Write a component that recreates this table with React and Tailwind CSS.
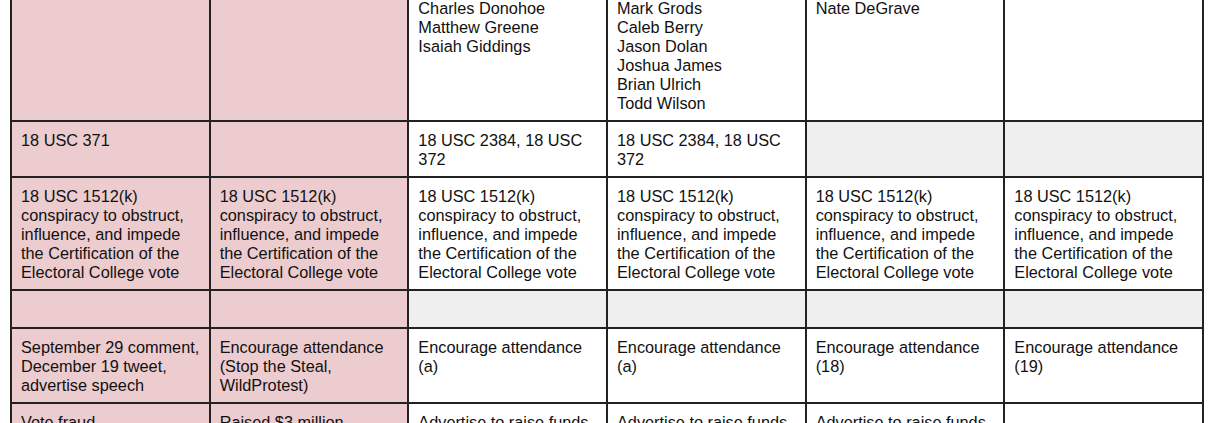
const PINK = 'bg-[#ecccce]';
const GRAY = 'bg-[#efefef]';
const WHITE = 'bg-white';

const charge =
  '18 USC 1512(k) conspiracy to obstruct, influence, and impede the Certification of the Electoral College vote';

// each row: [text, background] per column
const rows = [
  [
    ['', PINK],
    ['', PINK],
    [['Charles Donohoe', 'Matthew Greene', 'Isaiah Giddings'], WHITE],
    [['Mark Grods', 'Caleb Berry', 'Jason Dolan', 'Joshua James', 'Brian Ulrich', 'Todd Wilson'], WHITE],
    [['Nate DeGrave'], WHITE],
    ['', WHITE],
  ],
  [
    ['18 USC 371', PINK],
    ['', PINK],
    ['18 USC 2384, 18 USC 372', WHITE],
    ['18 USC 2384, 18 USC 372', WHITE],
    ['', GRAY],
    ['', GRAY],
  ],
  [
    [charge, PINK],
    [charge, PINK],
    [charge, WHITE],
    [charge, WHITE],
    [charge, WHITE],
    [charge, WHITE],
  ],
  [
    ['', PINK],
    ['', PINK],
    ['', GRAY],
    ['', GRAY],
    ['', GRAY],
    ['', GRAY],
  ],
  [
    ['September 29 comment, December 19 tweet, advertise speech', PINK],
    ['Encourage attendance (Stop the Steal, WildProtest)', PINK],
    ['Encourage attendance (a)', WHITE],
    ['Encourage attendance (a)', WHITE],
    ['Encourage attendance (18)', WHITE],
    ['Encourage attendance (19)', WHITE],
  ],
  [
    ['Vote fraud', PINK],
    ['Raised $3 million', PINK],
    ['Advertise to raise funds', WHITE],
    ['Advertise to raise funds', WHITE],
    ['Advertise to raise funds', WHITE],
    ['', WHITE],
  ],
];

function Cell({ text, bg }) {
  return (
    <div className={`${bg} min-h-[36px] px-[9px] pt-[9px] pb-[7px]`}>
      {Array.isArray(text)
        ? text.map((line) => <div key={line}>{line}</div>)
        : text}
    </div>
  );
}

export default function App() {
  return (
    <div
      className="min-h-screen overflow-hidden bg-white text-[16.3px] leading-[19px] text-[#111]"
      style={{ fontFamily: '"Liberation Sans", Arial, sans-serif' }}
    >
      <div className="ml-[10px] -mt-[12px] grid w-[1194px] grid-cols-6 gap-[2px] bg-[#222] p-[2px]">
        {rows.map((row, r) =>
          row.map(([text, bg], c) => <Cell key={`${r}-${c}`} text={text} bg={bg} />)
        )}
      </div>
    </div>
  );
}
